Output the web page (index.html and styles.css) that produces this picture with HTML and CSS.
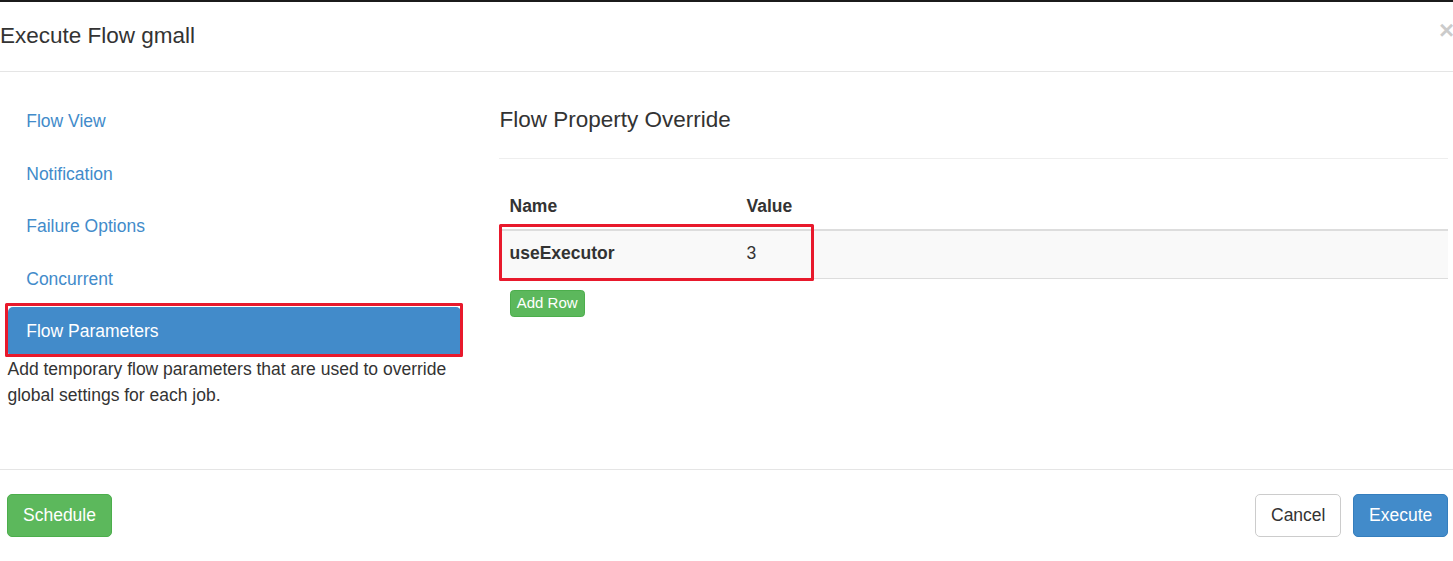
FILE: index.html
```html
<!DOCTYPE html>
<html>
<head>
<meta charset="utf-8">
<title>Execute Flow gmall</title>
<link rel="stylesheet" href="styles.css">
</head>
<body>
<div class="modal">
  <div class="modal-header">
    <h4 class="modal-title">Execute Flow gmall</h4>
    <button class="close" type="button">&times;</button>
  </div>
  <div class="modal-body">
    <div class="col-left">
      <ul class="nav-pills">
        <li><a href="#">Flow View</a></li>
        <li><a href="#">Notification</a></li>
        <li><a href="#">Failure Options</a></li>
        <li><a href="#">Concurrent</a></li>
        <li class="active"><a href="#">Flow Parameters</a></li>
      </ul>
      <p class="desc">Add temporary flow parameters that are used to override global settings for each job.</p>
    </div>
    <div class="col-right">
      <h4 class="section-title">Flow Property Override</h4>
      <table class="table">
        <thead>
          <tr><th class="col-name">Name</th><th>Value</th></tr>
        </thead>
        <tbody>
          <tr><td class="col-name prop-name">useExecutor</td><td>3</td></tr>
        </tbody>
      </table>
      <div class="add-row-wrap"><button class="btn-xs" type="button">Add Row</button></div>
    </div>
    <div class="mark mark-nav"></div>
    <div class="mark mark-row"></div>
  </div>
  <div class="modal-footer">
    <button class="btn btn-success" type="button">Schedule</button>
    <div class="footer-right">
      <button class="btn btn-default" type="button">Cancel</button>
      <button class="btn btn-primary" type="button">Execute</button>
    </div>
  </div>
</div>
</body>
</html>
```

FILE: styles.css
```css
* { box-sizing: border-box; }
html, body { margin: 0; padding: 0; background: #fff; }
body {
  font-family: "Liberation Sans", Arial, sans-serif;
  font-size: 17.5px;
  line-height: 25px;
  color: #333;
  width: 1453px;
  height: 561px;
  overflow: hidden;
}
.modal {
  border-top: 2px solid #1b1b1b;
}
.modal-header {
  display: flex;
  justify-content: space-between;
  align-items: flex-start;
  padding: 17.5px 0 19.75px 0;
  border-bottom: 1px solid #e5e5e5;
}
.modal-title {
  margin: 0;
  font-size: 22.5px;
  line-height: 32px;
  font-weight: 500;
  color: #333;
}
.close {
  border: 0;
  background: transparent;
  padding: 0;
  margin: 0;
  font-family: "Liberation Sans", Arial, sans-serif;
  font-size: 26px;
  font-weight: bold;
  line-height: 20px;
  color: #000;
  opacity: .2;
  width: 14px;
  height: 20px;
  text-align: left;
  overflow: visible;
}
.modal-body {
  position: relative;
  display: grid;
  grid-template-columns: 453.5px 1fr;
  column-gap: 37.5px;
  padding: 24.5px 5px 0 7.5px;
  height: 397.5px;
  border-bottom: 1px solid #e5e5e5;
}
.nav-pills {
  list-style: none;
  margin: 0;
  padding: 0;
}
.nav-pills li + li { margin-top: 2.5px; }
.nav-pills a {
  display: block;
  padding: 12.5px 18.75px;
  line-height: 25px;
  color: #428bca;
  text-decoration: none;
  border-radius: 5px;
}
.nav-pills li.active a {
  background: #428bca;
  color: #fff;
}
.desc {
  margin: -1px 0 0 0;
  line-height: 26px;
}
.section-title {
  margin: 0;
  padding: 7px 0 22.5px 1px;
  font-size: 22.5px;
  line-height: 32px;
  font-weight: 500;
  border-bottom: 1px solid #eee;
}
.table {
  width: 100%;
  border-collapse: collapse;
  margin-top: 24.5px;
  border-bottom: 1.5px solid #ddd;
}
.table th, .table td {
  text-align: left;
  padding: 10px 10px 10px 11px;
  line-height: 25px;
  vertical-align: bottom;
}
.table td { padding-top: 10.5px; padding-bottom: 11.5px; }
.table th {
  font-weight: bold;
  border-bottom: 2.5px solid #ddd;
}
.table .col-name { width: 237px; }
.table tbody tr { background: #f9f9f9; }
.table td.prop-name { font-weight: bold; }
.add-row-wrap {
  padding: 11px 0 0 11px;
}
.btn-xs {
  font-family: "Liberation Sans", Arial, sans-serif;
  font-size: 15px;
  line-height: 22.5px;
  padding: 1px 6.25px 1.5px;
  border: 1.25px solid #4cae4c;
  background: #5cb85c;
  color: #fff;
  border-radius: 3.75px;
}
.modal-footer {
  display: flex;
  justify-content: space-between;
  padding: 24px 5px 0 7px;
}
.footer-right { display: flex; gap: 12px; }
.btn {
  font-family: "Liberation Sans", Arial, sans-serif;
  font-size: 17.5px;
  line-height: 25px;
  padding: 7.5px 15px;
  border: 1.25px solid transparent;
  border-radius: 5px;
  height: 43px;
}
.btn-success { background: #5cb85c; border-color: #4cae4c; color: #fff; width: 105px; }
.btn-default { background: #fff; border-color: #ccc; color: #333; width: 86px; }
.btn-primary { background: #428bca; border-color: #357ebd; color: #fff; width: 95px; }
.mark {
  position: absolute;
  border: 3px solid #e8192c;
  border-radius: 1.5px;
  pointer-events: none;
}
.mark-nav { left: 5px; top: 231px; width: 458px; height: 54px; }
.mark-row { left: 499px; top: 152px; width: 315px; height: 57px; }
```
